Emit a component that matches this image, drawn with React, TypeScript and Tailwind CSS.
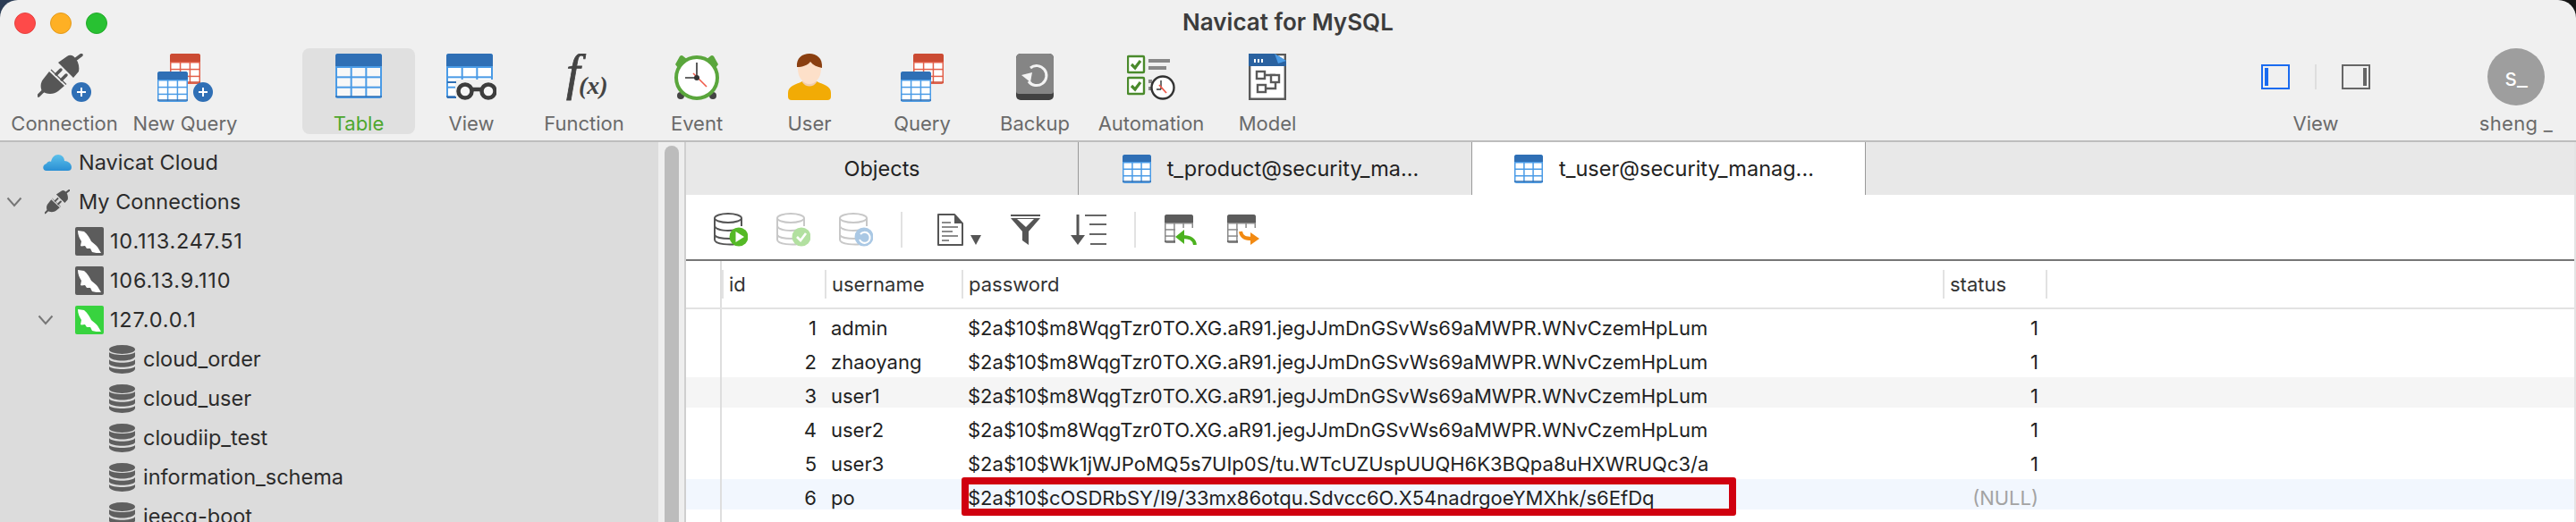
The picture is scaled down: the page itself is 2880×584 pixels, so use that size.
import type { ReactNode } from "react";

const BLUE = "#2f6fb5";
const BLUE_LIGHT = "#4a9be6";
const RED = "#cb4b33";
const RED_LIGHT = "#e2604a";

// grid table used all over the toolbars
const Grid = ({ x = 0, y = 0, w, h, head, dark, line, cols = 3, rows = 3, fill = "#fff" }: { x?: number; y?: number; w: number; h: number; head: number; dark: string; line: string; cols?: number; rows?: number; fill?: string }) => {
  const gap = w > 36 ? 2 : 1.5;
  const cw = (w - gap * (cols + 1)) / cols;
  const ch = (h - head - gap * (rows + 1)) / rows;
  const cells = [];
  for (let r = 0; r < rows; r++) {
    for (let c = 0; c < cols; c++) {
      cells.push(<rect key={r + "-" + c} x={x + gap + c * (cw + gap)} y={y + head + gap + r * (ch + gap)} width={cw} height={ch} fill={fill} />);
    }
  }
  return (
    <g>
      <rect x={x} y={y} width={w} height={h} rx={2.5} fill={line} />
      <path d={`M${x} ${y + head} V${y + 3} a3 3 0 0 1 3 -3 H${x + w - 3} a3 3 0 0 1 3 3 V${y + head} Z`} fill={dark} />
      {cells}
      <path d={`M${x} ${y + h - 2} H${x + w}`} stroke={dark} strokeWidth={1.5} />
    </g>
  );
};

const TableIcon = () => (
  <svg width="52" height="50" viewBox="0 0 52 50">
    <Grid w={52} h={50} head={14} dark={BLUE} line={BLUE_LIGHT} fill="#f8f8f8" />
  </svg>
);

const SmallTable = () => (
  <svg width="32" height="32" viewBox="0 0 32 32">
    <Grid w={32} h={32} head={8} dark={BLUE} line={BLUE_LIGHT} />
  </svg>
);

const PlusBadge = ({ cx, cy }: { cx: number; cy: number }) => (
  <g>
    <circle cx={cx} cy={cy} r={11} fill={BLUE} />
    <path d={`M${cx - 5} ${cy} H${cx + 5} M${cx} ${cy - 5} V${cy + 5}`} stroke="#fff" strokeWidth={2} />
  </g>
);

// two halves of a plug, pulled apart
const Plug = ({ fill = "#565656", bg = "#f0f0f0" }: { fill?: string; bg?: string }) => (
  <g>
    <path d="M1 47 L6 42" stroke={fill} strokeWidth="3.5" strokeLinecap="round" />
    <path d="M5 42 C3 38 3 33 6 29 L13 20 L30 36 L23 42 C18 46 10 46 5 42 Z" fill={fill} />
    <path d="M14 18.500 L32 35" stroke={bg} strokeWidth="1" />
    <path d="M15 18 L32 34.500" stroke={fill} strokeWidth="1.2" />
    <path d="M21 23 L26 18 M27 29 L32 24" stroke={fill} strokeWidth="3.500" strokeLinecap="round" />
    <path d="M23 10 L33 3 C37 0 41 3 43 6 C46 10 47 16 46 20 L40 27 Z" fill={fill} />
    <path d="M43 6 L49 1.500" stroke={fill} strokeWidth="3.500" strokeLinecap="round" />
  </g>
);

const ConnectionIcon = () => (
  <svg width="60" height="54" viewBox="0 0 60 54">
    <Plug />
    <PlusBadge cx={49} cy={43} />
  </svg>
);

const QueryPair = ({ plus }: { plus?: boolean }) => (
  <svg width={plus ? 62 : 48} height="54" viewBox={plus ? "0 0 62 54" : "0 0 48 54"}>
    <Grid x={14} w={34} h={34} head={9} dark={RED} line={RED_LIGHT} />
    <Grid y={20} w={34} h={34} head={9} dark={BLUE} line={BLUE_LIGHT} />
    {plus && <PlusBadge cx={51} cy={43} />}
  </svg>
);

const ViewIcon = () => (
  <svg width="56" height="52" viewBox="0 0 56 52">
    <Grid w={52} h={50} head={14} dark={BLUE} line={BLUE_LIGHT} />
    <rect x="10" y="29" width="46" height="23" fill="#f0f0f0" />
    <path d="M1 32 H11 M1 49 H11" stroke={BLUE} strokeWidth={2} />
    <g fill="#f6f6f6" stroke="#3d3d3d" strokeWidth={4.5}>
      <circle cx="21" cy="42" r="7.500" />
      <circle cx="47" cy="42" r="7.500" />
      <path d="M29 40 H39" />
    </g>
  </svg>
);

const FunctionIcon = () => (
  <svg width="58" height="54" viewBox="0 0 58 54">
    <text x="9" y="40" fontFamily="'Liberation Serif',serif" fontStyle="italic" fontSize="56" fill="#444" stroke="#444" strokeWidth="0.8">f</text>
    <text x="23" y="45" fontFamily="'Liberation Serif',serif" fontStyle="italic" fontWeight="700" fontSize="28" fill="#444">(x)</text>
  </svg>
);

const EventIcon = () => (
  <svg width="52" height="52" viewBox="0 0 52 52">
    <path d="M2 12 L7 3 Q9 1 11 3 L16 7 L5 16 Z M50 12 L45 3 Q43 1 41 3 L36 7 L47 16 Z" fill="#5aa63c" />
    <circle cx="8" cy="47" r="4" fill="#444" />
    <circle cx="44" cy="47" r="4" fill="#444" />
    <ellipse cx="26" cy="27" rx="23" ry="23" fill="#fff" stroke="#5aa63c" strokeWidth="4" />
    <path d="M26 10 V28 M13 27 H26" stroke="#333" strokeWidth="1.6" />
    <path d="M22 22 L37 37" stroke="#f05a4a" strokeWidth="1.6" />
    <circle cx="26" cy="27" r="3" fill="#333" />
  </svg>
);

const UserIcon = () => (
  <svg width="48" height="52" viewBox="0 0 48 52">
    <path d="M0 44 C0 36 8 35 16 31 L32 31 C40 35 48 36 48 44 V48 a4 4 0 0 1 -4 4 H4 a4 4 0 0 1 -4 -4 Z" fill="#f2ab05" />
    <path d="M16 24 H32 V32 C28 38 20 38 16 32 Z" fill="#f0cdb0" />
    <ellipse cx="24" cy="17" rx="13" ry="17" fill="#fde0c9" />
    <path d="M10 15 C9 5 16 0 24 0 C32 0 39 5 38 16 C33 15 28 13 25 9 C22 13 16 15 10 15 Z" fill="#8a3f10" />
  </svg>
);

const BackupIcon = () => (
  <svg width="42" height="52" viewBox="0 0 42 52">
    <rect width="42" height="52" rx="5" fill="#414141" />
    <path d="M0 5 a5 5 0 0 1 5 -5 H37 a5 5 0 0 1 5 5 V42 a3 3 0 0 1 -3 3 H3 a3 3 0 0 1 -3 -3 Z" fill="#858585" />
    <path d="M16 16 A11 11 0 1 1 14 31" fill="none" stroke="#f3f3f3" strokeWidth="3" />
    <path d="M6 24 L18 21 L16 32 Z" fill="#f3f3f3" />
  </svg>
);

const AutomationIcon = () => (
  <svg width="54" height="52" viewBox="0 0 54 52">
    <rect x="1" y="3" width="18" height="18" rx="1" fill="#fff" stroke="#4a8a2c" strokeWidth="2.400" />
    <rect x="1" y="27" width="18" height="18" rx="1" fill="#fff" stroke="#4a8a2c" strokeWidth="2.400" />
    <path d="M5 12 L9 16 L15 8 M5 36 L9 40 L15 32" fill="none" stroke="#4a8a2c" strokeWidth="3.200" />
    <path d="M24 8 H48 M24 16 H44 M24 31 H28 M24 39 H28" stroke="#888" strokeWidth="4" />
    <circle cx="40" cy="38" r="12.500" fill="#fff" stroke="#333" strokeWidth="2.400" />
    <path d="M38 30 V40 M33 40 H38" stroke="#333" strokeWidth="1.400" />
    <path d="M36 35 L44 44" stroke="#f05a4a" strokeWidth="1.800" />
  </svg>
);

const ModelIcon = () => (
  <svg width="42" height="52" viewBox="0 0 42 52">
    <path d="M1.200 1 H40.800 V50.800 H1.200 Z" fill="#fff" stroke="#5a5a5a" strokeWidth="2.400" />
    <path d="M0 0 H29 L42 8 V14 H0 Z" fill="#2a62a0" />
    <path d="M29 0 L42 8 L33 11 Z" fill="#4a9be6" />
    <path d="M7 6 V10 M11 6 V10 M15 6 V10" stroke="#fff" strokeWidth="2" />
    <g fill="#fff" stroke="#5a5a5a" strokeWidth="2.400">
      <path d="M18 24 H30 M30 32 V39 H19" fill="none" />
      <rect x="9" y="20" width="9" height="8" />
      <rect x="25" y="24" width="9" height="8" />
      <rect x="10" y="35" width="9" height="8" />
    </g>
  </svg>
);

const Dolphin = ({ bg }: { bg: string }) => (
  <svg width="32" height="32" viewBox="0 0 32 32">
    <rect width="32" height="32" rx="2" fill={bg} />
    <path d="M3 4 L10 5 C14 8 16 12 18 16 C21 19 25 21 26 24 L29 29 C25 29 22 29 19 28 L17 24 L13 24 L11 21 C9 21 7 22 6 21 L7 16 C5 13 3 9 3 4 Z" fill="#fff" />
  </svg>
);

const DbIcon = () => (
  <svg width="29" height="32" viewBox="0 0 29 32" fill="#5f5f5f">
    <ellipse cx="14.500" cy="5" rx="14.500" ry="5" />
    <path d="M0 8 C3 12 26 12 29 8 V13 C26 19 3 19 0 13 Z" />
    <path d="M0 16 C3 21 26 21 29 16 V21 C26 26 3 26 0 21 Z" />
    <path d="M0 24 C3 28 26 28 29 24 V27 C26 33.500 3 33.500 0 27 Z" />
  </svg>
);

const Chevron = () => (
  <svg width="18" height="12" viewBox="0 0 18 12">
    <path d="M1.500 1.500 L9 10 L16.500 1.500" fill="none" stroke="#777" strokeWidth="2" />
  </svg>
);

const CloudIcon = () => (
  <svg width="32" height="18" viewBox="0 0 32 18">
    <defs>
      <linearGradient id="cloud" x1="0" y1="0" x2="0" y2="1">
        <stop offset="0" stopColor="#5cc0ea" />
        <stop offset="1" stopColor="#2a8fd4" />
      </linearGradient>
    </defs>
    <path d="M4 18 C-1 18 -1 11 4 10 C5 8 7 7 9 8 C10 3 13 0 17 0 C21 0 24 3 24 7 C28 7 32 10 32 14 C32 17 30 18 28 18 Z" fill="url(#cloud)" />
  </svg>
);

const SmallPlug = () => (
  <svg width="28" height="28" viewBox="0 0 50 50">
    <Plug fill="#555" bg="#dcdcdc" />
  </svg>
);

const DbOutline = ({ stroke, badge, children }: { stroke: string; badge: string; children: ReactNode }) => (
  <svg width="38" height="38" viewBox="0 0 38 38">
    <g fill="none" stroke={stroke} strokeWidth="2">
      <ellipse cx="16" cy="6" rx="15" ry="5" />
      <path d="M1 6 V30 C1 36 20 36 24 35 M1 15 C3 20 16 21 25 19 M1 25 C3 29 12 29 18 29 M31 6 V15" />
    </g>
    <circle cx="28" cy="27" r="10.500" fill={badge} />
    {children}
  </svg>
);

const DocIcon = () => (
  <svg width="50" height="36" viewBox="0 0 50 36">
    <path d="M2 1 H20 L29 11 V35 H2 Z" fill="#fff" stroke="#555" strokeWidth="2" strokeLinejoin="round" />
    <path d="M20 1 L29 11 H20 Z" fill="#555" />
    <path d="M6 10 H16 M6 15 H24 M6 20 H18 M6 25 H24 M6 30 H14" stroke="#666" strokeWidth="1.600" />
    <path d="M38 24 H50 L44 35 Z" fill="#555" />
  </svg>
);

const FunnelIcon = () => (
  <svg width="33" height="34" viewBox="0 0 33 34">
    <path d="M0 1 H33" stroke="#555" strokeWidth="2" />
    <path d="M0 4 H33 L20 19 V34 L13 29 V19 Z" fill="#555" />
    <path d="M7 5 H26 L17 14 Z" fill="#fff" />
  </svg>
);

const SortIcon = () => (
  <svg width="40" height="34" viewBox="0 0 40 34">
    <path d="M8 0 V26" stroke="#555" strokeWidth="3" />
    <path d="M0 23 H16 L8 34 Z" fill="#555" />
    <path d="M16 1 H40 M21 11 H40 M21 22 H40 M22 33 H40" stroke="#666" strokeWidth="2" />
  </svg>
);

const TableArrow = ({ color, flip }: { color: string; flip?: boolean }) => (
  <svg width="36" height="34" viewBox="0 0 36 34">
    <Grid w={32} h={32} head={9} dark="#5c5c5c" line="#8a8a8a" />
    <rect x="12" y="15" width="24" height="19" fill="#fff" />
    {flip ? (
      <g>
        <path d="M15 19 C16 26 21 27 28 27" fill="none" stroke={color} strokeWidth="4" />
        <path d="M26 20 L36 27 L26 34 Z" fill={color} />
      </g>
    ) : (
      <g>
        <path d="M34 34 C33 27 28 25 20 25" fill="none" stroke={color} strokeWidth="4" />
        <path d="M22 17 L12 25 L22 33 Z" fill={color} />
      </g>
    )}
  </svg>
);

const toolItems: { label: string; icon: ReactNode; w: string; active?: boolean }[] = [
  { label: "Table", icon: <TableIcon />, w: "w-[126px]", active: true },
  { label: "View", icon: <ViewIcon />, w: "w-[126px]" },
  { label: "Function", icon: <FunctionIcon />, w: "w-[126px]" },
  { label: "Event", icon: <EventIcon />, w: "w-[126px]" },
  { label: "User", icon: <UserIcon />, w: "w-[126px]" },
  { label: "Query", icon: <QueryPair />, w: "w-[126px]" },
  { label: "Backup", icon: <BackupIcon />, w: "w-[126px]" },
  { label: "Automation", icon: <AutomationIcon />, w: "w-[134px]" },
  { label: "Model", icon: <ModelIcon />, w: "w-[126px]" },
];

const ToolButton = ({ label, icon, w, active }: { label: string; icon: ReactNode; w: string; active?: boolean }) => (
  <div className={`${w} h-[96px] flex flex-col items-center pt-[6px] rounded-lg ${active ? "bg-[#e0e0e0]" : ""}`}>
    <div className="h-[56px] flex items-start justify-center">{icon}</div>
    <div className={`mt-[10px] leading-[24px] text-[22px] whitespace-nowrap ${active ? "text-[#4ea72e]" : "text-[#6a6a6a]"}`}>{label}</div>
  </div>
);

const TreeRow = ({ pl, chevron, icon, label, gap = "gap-[7px]", track = "" }: { pl: string; chevron?: ReactNode; icon: ReactNode; label: string; gap?: string; track?: string }) => (
  <div className={`h-[44px] flex items-center ${pl} ${gap} shrink-0`}>
    {chevron}
    {icon}
    <span className={`text-[23.5px] text-[#2b2b2b] whitespace-nowrap ${track}`}>{label}</span>
  </div>
);

const HASH = "$2a$10$m8WqgTzr0TO.XG.aR91.jegJJmDnGSvWs69aMWPR.WNvCzemHpLum";

const rows = [
  { id: 1, name: "admin", pw: HASH, status: "1", bg: "" },
  { id: 2, name: "zhaoyang", pw: HASH, status: "1", bg: "" },
  { id: 3, name: "user1", pw: HASH, status: "1", bg: "bg-[#f5f5f5]" },
  { id: 4, name: "user2", pw: HASH, status: "1", bg: "" },
  { id: 5, name: "user3", pw: "$2a$10$Wk1jWJPoMQ5s7UIp0S/tu.WTcUZUspUUQH6K3BQpa8uHXWRUQc3/a", status: "1", bg: "" },
  { id: 6, name: "po", pw: "$2a$10$cOSDRbSY/I9/33mx86otqu.Sdvcc6O.X54nadrgoeYMXhk/s6EfDq", status: "(NULL)", bg: "bg-[#f2f7fe]" },
];

const HeadCell = ({ label, w }: { label: string; w: string }) => (
  <div className={`${w} h-[32px] border-l-2 border-[#e2e2e2] pl-[6px] text-[22px] leading-[32px] text-[#333]`}>{label}</div>
);

export default function App() {
  return (
    <div className="h-[584px] w-[2880px] overflow-hidden bg-gradient-to-r from-[#2c3d55] via-[#222] to-[#151515] font-['Inter',sans-serif]">
      <div className="h-full flex flex-col rounded-t-[20px] overflow-hidden">
        {/* title + toolbar */}
        <div className="h-[159px] shrink-0 bg-[#f0f0f0] border-b-2 border-[#bdbdbd]">
          <div className="h-[54px] relative flex items-center justify-center">
            <div className="absolute left-[16px] top-[14px] flex gap-[16px]">
              <div className="w-[24px] h-[24px] rounded-full bg-[#fe4a49] border border-[#e5423f]" />
              <div className="w-[24px] h-[24px] rounded-full bg-[#feb024] border border-[#e29a1d]" />
              <div className="w-[24px] h-[24px] rounded-full bg-[#28c132] border border-[#23a92b]" />
            </div>
            <span className="text-[26px] font-semibold text-[#3c3c3c] -mt-[6px]">Navicat for MySQL</span>
          </div>
          <div className="flex pl-[9px]">
            <ToolButton label="Connection" icon={<ConnectionIcon />} w="w-[126px]" />
            <ToolButton label="New Query" icon={<QueryPair plus />} w="w-[144px]" />
            <div className="w-[59px]" />
            {toolItems.map((t) => (
              <ToolButton key={t.label} {...t} />
            ))}
            <div className="flex-1" />
            <div className="w-[122px] h-[96px] flex flex-col items-center">
              <div className="h-[62px] pt-[18px] flex items-start gap-[28px]">
                <div className="w-[32px] h-[28px] border-2 border-[#1a6bf0] pl-[2px] py-[2px]">
                  <div className="w-[4px] h-full bg-[#1a6bf0]" />
                </div>
                <div className="w-[2px] h-[28px] bg-[#dedede]" />
                <div className="w-[32px] h-[28px] border-2 border-[#666] pr-[2px] py-[2px] flex justify-end">
                  <div className="w-[4px] h-full bg-[#666]" />
                </div>
              </div>
              <div className="mt-[10px] leading-[24px] text-[22px] text-[#6a6a6a]">View</div>
            </div>
            <div className="w-[98px]" />
            <div className="w-[130px] h-[96px] flex flex-col items-center">
              <div className="w-[64px] h-[64px] rounded-full bg-[#9e9e9e] flex items-center justify-center text-white text-[26px]">s_</div>
              <div className="mt-[8px] leading-[24px] text-[22px] tracking-[0.3px] text-[#6a6a6a] whitespace-nowrap">sheng _</div>
            </div>
            <div className="w-[2px]" />
          </div>
        </div>

        <div className="flex-1 flex min-h-0">
          {/* connection tree */}
          <div className="w-[736px] shrink-0 bg-[#dcdcdc] pt-[1px] flex flex-col overflow-hidden">
            <TreeRow pl="pl-[48px]" icon={<CloudIcon />} label="Navicat Cloud" gap="gap-[8px]" />
            <TreeRow pl="pl-[7px]" chevron={<Chevron />} icon={<span className="ml-[25px] mr-[10px] flex"><SmallPlug /></span>} label="My Connections" gap="gap-0" />
            <TreeRow pl="pl-[84px]" icon={<Dolphin bg="#5c5c5c" />} label="10.113.247.51" track="tracking-[0.8px]" />
            <TreeRow pl="pl-[84px]" icon={<Dolphin bg="#5c5c5c" />} label="106.13.9.110" track="tracking-[0.8px]" />
            <TreeRow pl="pl-[42px]" chevron={<span className="mr-[24px] flex"><Chevron /></span>} icon={<span className="mr-[7px] flex"><Dolphin bg="#38d33f" /></span>} label="127.0.0.1" gap="gap-0" track="tracking-[0.8px]" />
            {["cloud_order", "cloud_user", "cloudiip_test", "information_schema", "jeecg-boot"].map((db) => (
              <TreeRow key={db} pl="pl-[122px]" icon={<DbIcon />} label={db} gap="gap-[9px]" />
            ))}
          </div>
          {/* scrollbar */}
          <div className="w-[31px] shrink-0 bg-[#eeeeee] border-r-2 border-[#cfcfcf] pl-[7px] pt-[4px]">
            <div className="w-[16px] h-[500px] rounded-full bg-[#bcbcbc]" />
          </div>

          {/* main panel */}
          <div className="flex-1 flex flex-col bg-white min-w-0 border-r-2 border-[#e4e4e4]">
            <div className="h-[59px] shrink-0 flex bg-[#e8e8e8]">
              <div className="w-[439px] flex items-center justify-center text-[23.5px] text-[#222] border-r border-[#999]">Objects</div>
              <div className="w-[440px] pr-[10px] flex items-center justify-center gap-[18px] text-[23.5px] text-[#222] border-r border-[#999]">
                <SmallTable />
                <span>t_product@security_ma...</span>
              </div>
              <div className="w-[440px] pr-[10px] flex items-center justify-center gap-[18px] text-[23.5px] text-[#222] border-r border-[#999] bg-white">
                <SmallTable />
                <span>t_user@security_manag...</span>
              </div>
            </div>

            <div className="h-[74px] shrink-0 border-b-2 border-[#777] flex items-center pl-[31px] pt-[6px]">
              <div className="flex items-center gap-[32px]">
                <DbOutline stroke="#555" badge="#55b926">
                  <path d="M24.500 21 L34 27 L24.500 33 Z" fill="#fff" />
                </DbOutline>
                <DbOutline stroke="#c8c8c8" badge="#b2e0a0">
                  <path d="M23 27 L27 31 L33 23" fill="none" stroke="#fff" strokeWidth="2.600" />
                </DbOutline>
                <DbOutline stroke="#c8c8c8" badge="#aac8e4">
                  <path d="M24 24 A6 6 0 1 1 23 30" fill="none" stroke="#fff" strokeWidth="2" />
                </DbOutline>
              </div>
              <div className="w-[2px] h-[40px] bg-[#e2e2e2] ml-[31px] mr-[38px]" />
              <DocIcon />
              <div className="w-[33px]" />
              <FunnelIcon />
              <div className="w-[34px]" />
              <SortIcon />
              <div className="w-[2px] h-[40px] bg-[#e2e2e2] ml-[31px] mr-[32px]" />
              <TableArrow color="#4cb21f" />
              <div className="w-[34px]" />
              <TableArrow color="#f28a12" flip />
            </div>

            <div className="h-[54px] shrink-0 flex items-start border-b-2 border-[#e2e2e2]">
              <div className="w-[40px] h-[52px] border-r-2 border-[#dedede]" />
              <div className="flex pt-[10px]">
                <HeadCell label="id" w="w-[115px]" />
                <HeadCell label="username" w="w-[153px]" />
                <HeadCell label="password" w="w-[1097px]" />
                <HeadCell label="status" w="w-[115px]" />
                <div className="h-[32px] border-l-2 border-[#e2e2e2]" />
              </div>
            </div>

            <div className="relative flex-1 flex flex-col text-[22px] text-[#222]">
              {rows.map((r) => (
                <div key={r.id} className="h-[38px] shrink-0 flex">
                  <div className="w-[40px] h-[38px] shrink-0 border-r-2 border-[#dedede]">
                    <div className={`h-[34px] ${r.bg}`} />
                  </div>
                  <div className={`flex-1 h-[34px] flex pt-[8px] leading-[26px] whitespace-nowrap ${r.bg}`}>
                    <div className="w-[113px] pr-[7px] text-right">{r.id}</div>
                    <div className="w-[153px] pl-[9px]">{r.name}</div>
                    <div className="w-[1097px] pl-[9px]">{r.pw}</div>
                    <div className={`w-[115px] pr-[6px] text-right ${r.status === "(NULL)" ? "text-[#a3a3a3]" : ""}`}>{r.status}</div>
                  </div>
                </div>
              ))}
              <div className="flex-1 w-[40px] border-r-2 border-[#dedede]" />
              {/* red annotation round the last password */}
              <div className="absolute left-[308px] top-[188px] w-[866px] h-[43px] border-8 border-[#d0000f] rounded-[3px]" />
            </div>
          </div>
        </div>
      </div>
    </div>
  );
}
